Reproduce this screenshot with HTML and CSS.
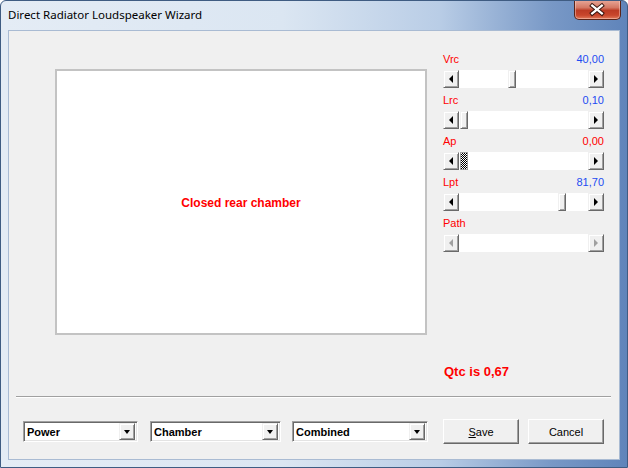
FILE: index.html
```html
<!DOCTYPE html>
<html>
<head>
<meta charset="utf-8">
<link rel="stylesheet" href="styles.css">
</head>
<body>
<div class="window">
  <div class="titlebar">
    <span class="title">Direct Radiator Loudspeaker Wizard</span>
    <span class="close">
      <svg width="47" height="20" viewBox="0 0 47 20">
        <path d="M18 5.5 L28 13.5 M28 5.5 L18 13.5" stroke="#3a1610" stroke-width="4.5" stroke-linecap="square" fill="none"/>
        <path d="M18 5.5 L28 13.5 M28 5.5 L18 13.5" stroke="#ffffff" stroke-width="2.4" stroke-linecap="square" fill="none"/>
      </svg>
    </span>
  </div>
  <div class="client">
    <div class="main">
      <div class="preview"><span class="preview-text">Closed rear chamber</span></div>
      <div class="panel">
        <div class="group">
          <div class="label-row"><span class="lbl">Vrc</span><span class="val blue">40,00</span></div>
          <div class="sb">
            <span class="sbtn"><i class="tri-l"></i></span>
            <div class="track"><span class="thumb" style="margin-left:49px"></span></div>
            <span class="sbtn"><i class="tri-r"></i></span>
          </div>
        </div>
        <div class="group">
          <div class="label-row"><span class="lbl">Lrc</span><span class="val blue">0,10</span></div>
          <div class="sb">
            <span class="sbtn"><i class="tri-l"></i></span>
            <div class="track"><span class="thumb" style="margin-left:1px"></span></div>
            <span class="sbtn"><i class="tri-r"></i></span>
          </div>
        </div>
        <div class="group">
          <div class="label-row"><span class="lbl">Ap</span><span class="val red">0,00</span></div>
          <div class="sb">
            <span class="sbtn"><i class="tri-l"></i></span>
            <div class="track"><span class="thumb dither" style="margin-left:1px"></span></div>
            <span class="sbtn"><i class="tri-r"></i></span>
          </div>
        </div>
        <div class="group">
          <div class="label-row"><span class="lbl">Lpt</span><span class="val blue">81,70</span></div>
          <div class="sb">
            <span class="sbtn"><i class="tri-l"></i></span>
            <div class="track"><span class="thumb" style="margin-left:99px"></span></div>
            <span class="sbtn"><i class="tri-r"></i></span>
          </div>
        </div>
        <div class="group">
          <div class="label-row"><span class="lbl">Path</span></div>
          <div class="sb disabled">
            <span class="sbtn"><i class="tri-l"></i></span>
            <div class="track"></div>
            <span class="sbtn"><i class="tri-r"></i></span>
          </div>
        </div>
        <div class="qtc">Qtc is 0,67</div>
      </div>
    </div>
    <div class="separator"></div>
    <div class="bottom">
      <div class="combo c1"><span class="ctext">Power</span><span class="cbtn"><i class="tri-d"></i></span></div>
      <div class="combo c2"><span class="ctext">Chamber</span><span class="cbtn"><i class="tri-d"></i></span></div>
      <div class="combo c3"><span class="ctext">Combined</span><span class="cbtn"><i class="tri-d"></i></span></div>
      <button class="btn save"><u>S</u>ave</button>
      <button class="btn cancel">Cancel</button>
    </div>
  </div>
</div>
</body>
</html>
```

FILE: styles.css
```css
html, body {
  margin: 0;
  padding: 0;
  background: #ffffff;
}

.window {
  width: 628px;
  height: 468px;
  box-sizing: border-box;
  border: 1px solid #3f5c82;
  border-radius: 6px 6px 0 0;
  background: linear-gradient(to right, #e4ecf5 0%, #dbe6f2 45%, #b9cde6 70%, #7898c6 88%, #5f84ba 100%);
  display: flex;
  flex-direction: column;
  overflow: hidden;
}

.titlebar {
  height: 29px;
  display: flex;
  align-items: flex-start;
}

.title {
  font-family: "Noto Sans", sans-serif;
  font-size: 11.5px;
  color: #000;
  margin: 6px 0 0 7px;
  line-height: 16px;
}

.close {
  margin-left: auto;
  margin-right: 6px;
  margin-top: -1px;
  width: 47px;
  height: 20px;
  box-sizing: border-box;
  border: 1px solid #5a2418;
  border-top: none;
  border-radius: 0 0 5px 5px;
  background: linear-gradient(to bottom, #e9a99a 0%, #d47864 40%, #bc3b24 55%, #c8462c 80%, #e07a5a 100%);
  box-shadow: inset 0 0 0 1px rgba(255, 220, 210, 0.45);
  display: flex;
}

.client {
  margin: 0 7px 7px 7px;
  flex: 1;
  background: #f0f0f0;
  border: 1px solid #a9bbd3;
  display: flex;
  flex-direction: column;
  font-family: "Liberation Sans", Arial, sans-serif;
  font-size: 11px;
}

.main {
  height: 365px;
  display: flex;
}

.preview {
  margin: 38px 0 0 46px;
  width: 372px;
  height: 266px;
  box-sizing: border-box;
  border: 2px solid #c3c3c3;
  background: #ffffff;
  display: flex;
  align-items: center;
  justify-content: center;
}

.preview-text {
  color: #ff0000;
  font-weight: bold;
  font-size: 12px;
  margin-top: 2px;
}

.panel {
  margin-left: 16px;
  width: 161px;
  padding-top: 21px;
  display: flex;
  flex-direction: column;
}

.group {
  margin-bottom: 5px;
}

.label-row {
  display: flex;
  justify-content: space-between;
  height: 14px;
  line-height: 14px;
  margin-bottom: 4px;
}

.lbl {
  color: #ff0000;
}

.val.blue {
  color: #1d4cf2;
}

.val.red {
  color: #ff0000;
}

.sb {
  height: 18px;
  display: flex;
}

.sbtn {
  width: 16px;
  height: 18px;
  box-sizing: border-box;
  background: #f0f0f0;
  border-top: 1px solid #f0f0f0;
  border-left: 1px solid #f0f0f0;
  border-right: 1px solid #696969;
  border-bottom: 1px solid #696969;
  box-shadow: inset 1px 1px 0 #ffffff, inset -1px -1px 0 #a0a0a0;
  display: flex;
  align-items: center;
  justify-content: center;
}

.track {
  flex: 1;
  background: #ffffff;
  display: flex;
}

.thumb {
  width: 8px;
  height: 18px;
  box-sizing: border-box;
  background: #f0f0f0;
  border-top: 1px solid #f0f0f0;
  border-left: 1px solid #f0f0f0;
  border-right: 1px solid #696969;
  border-bottom: 1px solid #696969;
  box-shadow: inset 1px 1px 0 #ffffff, inset -1px -1px 0 #a0a0a0;
}

.thumb.dither {
  background: repeating-conic-gradient(#000 0% 25%, #fff 0% 50%) 0 0 / 2px 2px;
  box-shadow: none;
  border: 1px solid #a0a0a0;
}

.tri-l {
  width: 0;
  height: 0;
  border-top: 4px solid transparent;
  border-bottom: 4px solid transparent;
  border-right: 4px solid #000;
  margin-left: -1px;
}

.tri-r {
  width: 0;
  height: 0;
  border-top: 4px solid transparent;
  border-bottom: 4px solid transparent;
  border-left: 4px solid #000;
}

.disabled .tri-l {
  border-right-color: #a0a0a0;
}

.disabled .tri-r {
  border-left-color: #a0a0a0;
}

.qtc {
  margin-top: auto;
  margin-bottom: 17px;
  margin-left: 1px;
  color: #ff0000;
  font-weight: bold;
  font-size: 13px;
  line-height: 15px;
}

.separator {
  margin: 0 8px 0 7px;
  border-top: 1px solid #a0a0a0;
  border-bottom: 1px solid #ffffff;
}

.bottom {
  display: flex;
  align-items: flex-start;
  padding: 21px 0 0 14px;
}

.combo {
  margin-top: 2px;
  height: 21px;
  box-sizing: border-box;
  background: #ffffff;
  border-top: 1px solid #a0a0a0;
  border-left: 1px solid #a0a0a0;
  border-right: 1px solid #ffffff;
  border-bottom: 1px solid #ffffff;
  box-shadow: inset 1px 1px 0 #696969, inset -1px -1px 0 #e3e3e3;
  display: flex;
  align-items: center;
  padding: 2px 2px 2px 3px;
}

.c1 { width: 115px; margin-right: 12px; }
.c2 { width: 131px; margin-right: 11px; }
.c3 { width: 136px; margin-right: 15px; }

.ctext {
  flex: 1;
  font-weight: bold;
  color: #000;
  font-size: 11px;
}

.cbtn {
  width: 16px;
  height: 17px;
  box-sizing: border-box;
  background: #f0f0f0;
  border-top: 1px solid #f0f0f0;
  border-left: 1px solid #f0f0f0;
  border-right: 1px solid #696969;
  border-bottom: 1px solid #696969;
  box-shadow: inset 1px 1px 0 #ffffff, inset -1px -1px 0 #a0a0a0;
  display: flex;
  align-items: center;
  justify-content: center;
}

.tri-d {
  width: 0;
  height: 0;
  border-left: 3.5px solid transparent;
  border-right: 3.5px solid transparent;
  border-top: 4px solid #000;
}

.btn {
  width: 76px;
  height: 25px;
  box-sizing: border-box;
  background: #f0f0f0;
  font-family: "Liberation Sans", Arial, sans-serif;
  font-size: 11px;
  color: #000;
  border-top: 1px solid #ffffff;
  border-left: 1px solid #ffffff;
  border-right: 1px solid #696969;
  border-bottom: 1px solid #696969;
  box-shadow: inset -1px -1px 0 #a0a0a0;
  padding: 0;
}

.save {
  margin-right: 9px;
}
```
